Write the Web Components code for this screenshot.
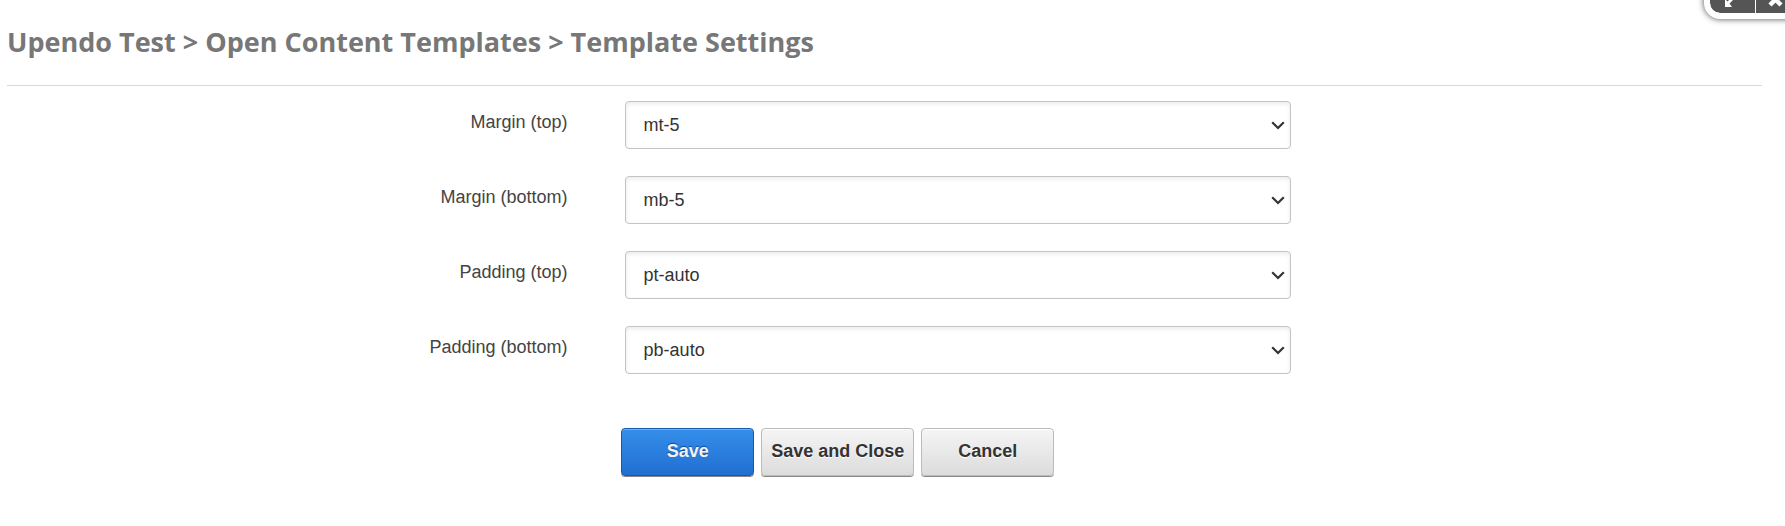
<!DOCTYPE html>
<html lang="en">
<head>
<meta charset="utf-8">
<title>Template Settings</title>
<style>
  body { margin: 0; background: #fff; color: #444; font: 18px/24px "Liberation Sans", Arial, sans-serif; }
</style>
</head>
<body>
<settings-page>
  <dialog-controls slot="controls"></dialog-controls>
  <page-title slot="title">Upendo Test &gt; Open Content Templates &gt; Template Settings</page-title>
  <select-field label="Margin (top)" value="mt-5"></select-field>
  <select-field label="Margin (bottom)" value="mb-5"></select-field>
  <select-field label="Padding (top)" value="pt-auto"></select-field>
  <select-field label="Padding (bottom)" value="pb-auto"></select-field>
  <action-button slot="actions" class="primary">Save</action-button>
  <action-button slot="actions">Save and Close</action-button>
  <action-button slot="actions">Cancel</action-button>
</settings-page>
<script>
const define = (name, html, setup) => customElements.define(name, class extends HTMLElement {
  constructor() {
    super();
    this.attachShadow({ mode: 'open' }).innerHTML = html;
  }
  connectedCallback() { if (setup) setup(this, this.shadowRoot); }
});

define('settings-page', `
  <style>
    :host { display: block; position: relative; overflow: hidden; padding: 0 23px 48px 7px; }
    .fields { display: grid; gap: 27px; padding-top: 15px; }
    .actions { display: flex; gap: 7px; margin: 54px 0 0 35%; }
  </style>
  <slot name="controls"></slot>
  <slot name="title"></slot>
  <form onsubmit="return false">
    <div class="fields"><slot></slot></div>
    <div class="actions"><slot name="actions"></slot></div>
  </form>`);

define('page-title', `
  <style>
    :host { display: block; padding: 22px 0 23px; border-bottom: 1px solid #d8d8d8; }
    h1 { margin: 0; font: bold 27px/40px "Open Sans", sans-serif; color: #777; }
  </style>
  <h1><slot></slot></h1>`);

define('select-field', `
  <style>
    :host { display: grid; grid-template-columns: 32% 38%; column-gap: 56px; align-items: start; }
    label { text-align: right; padding: 9px 1px 0 0; }
    select {
      appearance: none; box-sizing: border-box; width: 100%; height: 48px; margin: 0; padding: 0 32px 0 18px;
      font: inherit; color: #333; border: 1px solid #c4c4c4; border-radius: 4px;
      background: #fff url("data:image/svg+xml,%3Csvg xmlns='http://www.w3.org/2000/svg' width='14' height='9'%3E%3Cpath d='M1.2 1.2 7 7 12.8 1.2' fill='none' stroke='%23333' stroke-width='2.2'/%3E%3C/svg%3E") no-repeat right 5px center;
      box-shadow: inset 0 2px 4px rgba(0,0,0,.08);
    }
  </style>
  <label for="control"></label>
  <select id="control"><option></option></select>`,
  (host, root) => {
    root.querySelector('label').textContent = host.getAttribute('label');
    root.querySelector('option').textContent = host.getAttribute('value');
  });

define('action-button', `
  <style>
    :host {
      display: block; --edge: #bbb; --fill: linear-gradient(#f5f5f5, #dcdcdc);
      --ink: #333; --glow: #fff; --shine: #fff;
    }
    :host(.primary) {
      --edge: #1759a6; --fill: linear-gradient(#358eeb, #216fd0);
      --ink: #f2f2f2; --glow: #0d4a94; --shine: #6bb2f8;
    }
    button {
      min-width: 133px; height: 48px; padding: 0 9px 2px; margin: 0; cursor: pointer;
      font: bold 18px/24px "Liberation Sans", Arial, sans-serif; color: var(--ink); text-shadow: 0 1px 1px var(--glow);
      background: var(--fill); border: 1px solid var(--edge); border-radius: 4px;
      box-shadow: 0 1px 0 #888, inset 0 1px 0 var(--shine);
    }
    :host(.primary) button { text-shadow: 0 -1px 1px var(--glow); }
  </style>
  <button type="button"><slot></slot></button>`);

define('dialog-controls', `
  <style>
    :host {
      position: absolute; top: -18px; right: -22px; display: flex; gap: 1px; overflow: hidden;
      background: #fff; border: 6px solid #fff; border-radius: 16px; box-shadow: 0 0 6px rgba(0,0,0,.7);
    }
    button { display: block; width: 45px; height: 25px; margin: 0; padding: 0; border: 0; background: #555; }
    button:first-of-type { border-radius: 10px 0 0 10px; }
    button:last-of-type { border-radius: 0 10px 10px 0; }
    svg { display: block; }
  </style>
  <button type="button" aria-label="Expand"><svg width="45" height="25"><path d="M15 19v-8l2.500 2.500L24 7l2 2-6.500 6.500L22 19z" fill="#fff"/></svg></button>
  <button type="button" aria-label="Close"><svg width="45" height="25"><path d="M14 6 25 17M25 6 14 17" fill="none" stroke="#fff" stroke-width="4.500"/></svg></button>`);
</script>
</body>
</html>
